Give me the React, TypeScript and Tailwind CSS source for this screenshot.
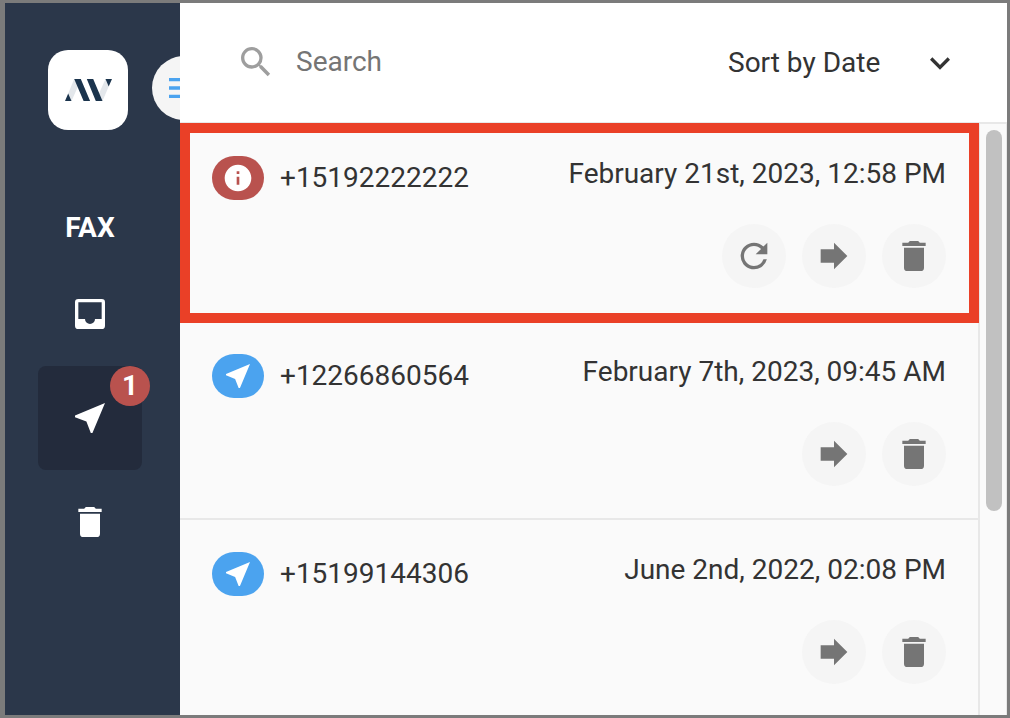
import React, { useState } from 'react';

const paths = {
  menu: 'M3 6h18v2H3V6m0 5h18v2H3v-2m0 5h18v2H3v-2z',
  inbox: 'M19 15h-4a3 3 0 0 1-6 0H5V5h14m0-2H5a2 2 0 0 0-2 2v14a2 2 0 0 0 2 2h14a2 2 0 0 0 2-2V5a2 2 0 0 0-2-2z',
  send: 'M21 3L3 10.53v.98l6.84 2.65L12.48 21h.98L21 3z',
  trash: 'M19 4h-3.5l-1-1h-5l-1 1H5v2h14M6 19a2 2 0 0 0 2 2h8a2 2 0 0 0 2-2V7H6v12z',
  search:
    'M15.5 14h-.79l-.28-.27A6.471 6.471 0 0 0 16 9.5 6.5 6.5 0 1 0 9.5 16c1.61 0 3.09-.59 4.23-1.57l.27.28v.79l5 4.99L20.49 19l-4.99-5zm-6 0C7.01 14 5 11.99 5 9.5S7.01 5 9.5 5 14 7.01 14 9.5 11.99 14 9.5 14z',
  chevron: 'M7.41 8.59L12 13.17l4.59-4.58L18 10l-6 6-6-6 1.41-1.41z',
  info: 'M12 2C6.48 2 2 6.48 2 12s4.48 10 10 10 10-4.48 10-10S17.52 2 12 2zm1 15h-2v-6h2v6zm0-8h-2V7h2v2z',
  retry:
    'M17.65 6.35A7.958 7.958 0 0 0 12 4a8 8 0 1 0 7.73 10h-2.08A5.99 5.99 0 0 1 12 18c-3.31 0-6-2.69-6-6s2.69-6 6-6c1.66 0 3.14.69 4.22 1.78L13 11h7V4l-2.35 2.35z',
  forward: 'M4 16V8h8V4l8 8-8 8v-4H4z',
};

type IconName = keyof typeof paths;

function Icon({ name, className = 'size-10' }: { name: IconName; className?: string }) {
  return (
    <svg viewBox="0 0 24 24" fill="currentColor" aria-hidden="true" className={`shrink-0 ${className}`}>
      <path d={paths[name]} />
    </svg>
  );
}

function Logo() {
  return (
    <div className="flex size-20 items-center justify-center rounded-[20px] bg-white">
      <svg viewBox="0 0 47 22" className="h-[22px] w-[47px]" aria-hidden="true">
        <path fill="#e3e7eb" d="M3.2 14.5L9.2 0l3.8 7.5L6.5 22zM40.5 0l3.2 7.5L37.5 22 34 14.5z" />
        <path
          fill="#1b344d"
          d="M9.2 0h6.6l9.3 22h-6.5zM21.8 0h6.4l9.3 22h-6.7zM0 22l3.2-7.5L6.5 22zM40.5 0H47l-3.3 7.5z"
        />
      </svg>
    </div>
  );
}

interface Fax {
  number: string;
  date: string;
  failed?: boolean;
}

const faxes: Fax[] = [
  { number: '+15192222222', date: 'February 21st, 2023, 12:58 PM', failed: true },
  { number: '+12266860564', date: 'February 7th, 2023, 09:45 AM' },
  { number: '+15199144306', date: 'June 2nd, 2022, 02:08 PM' },
];

function NavButton({ icon, label, active, count }: { icon: IconName; label: string; active?: boolean; count?: number }) {
  return (
    <button
      type="button"
      aria-label={label}
      className={`relative flex size-[104px] items-center justify-center rounded-lg text-white ${active ? 'bg-[#232b3c]' : ''}`}
    >
      <Icon name={icon} />
      {count && (
        <span className="absolute -right-2 top-0 flex size-10 items-center justify-center rounded-full bg-[#b9524e] text-[28px] font-bold">
          {count}
        </span>
      )}
    </button>
  );
}

function RoundButton({ icon, label }: { icon: IconName; label: string }) {
  return (
    <button
      type="button"
      aria-label={label}
      className="flex size-16 items-center justify-center rounded-full bg-[#f5f5f5] text-[#757575]"
    >
      <Icon name={icon} />
    </button>
  );
}

function FaxRow({ fax }: { fax: Fax }) {
  return (
    <li className="relative h-[198px] shrink-0 border-b-2 border-[#e8e8e8] px-8 pt-8">
      <div className="flex justify-between">
        <div className="flex items-center gap-4">
          <span
            className={`flex h-11 w-[52px] items-center justify-center rounded-[22px] text-white ${fax.failed ? 'bg-[#b9524e]' : 'bg-[#4ba3ef]'}`}
          >
            <Icon name={fax.failed ? 'info' : 'send'} className="size-8" />
          </span>
          <span>{fax.number}</span>
        </div>
        <time className="leading-9">{fax.date}</time>
      </div>
      <div className="mt-6 flex justify-end gap-4">
        {fax.failed && <RoundButton icon="retry" label="Retry" />}
        <RoundButton icon="forward" label="Forward" />
        <RoundButton icon="trash" label="Delete" />
      </div>
      {fax.failed && (
        <div className="pointer-events-none absolute -top-px -bottom-[3px] left-0 -right-px border-[10px] border-[#ea4027]" />
      )}
    </li>
  );
}

export default function App() {
  const [query, setQuery] = useState('');
  const [sort, setSort] = useState('date');

  return (
    <div className="flex h-screen overflow-hidden border-y-[3px] border-l-[5px] border-r-[3px] border-[#7b7b7b] bg-[#fafafa] font-['Roboto',sans-serif] text-[28px] leading-10 text-[#333333]">
      <aside className="w-[175px] shrink-0 overflow-hidden bg-[#2b374a]">
        <div className="flex w-max items-center gap-6 pl-[43px] pt-[47px]">
          <Logo />
          <button
            type="button"
            aria-label="Toggle menu"
            className="-mt-1 flex size-16 items-center justify-center rounded-full bg-[#f5f5f5] text-[#4ba3ef]"
          >
            <Icon name="menu" />
          </button>
        </div>
        <nav className="mt-[78px] flex w-[170px] flex-col items-center">
          <h2 className="mb-[14px] font-bold text-white">FAX</h2>
          <NavButton icon="inbox" label="Inbox" />
          <NavButton icon="send" label="Sent" active count={1} />
          <NavButton icon="trash" label="Trash" />
        </nav>
      </aside>

      <main className="flex min-w-0 flex-1 flex-col">
        <header className="flex h-[121px] shrink-0 items-center justify-between border-b-2 border-[#e8e8e8] bg-white pb-[2px] pl-14 pr-[47px]">
          <label className="flex items-center gap-5">
            <Icon name="search" className="size-10 text-[#9e9e9e]" />
            <input
              type="text"
              aria-label="Search"
              placeholder="Search"
              value={query}
              onChange={(e) => setQuery(e.target.value)}
              className="w-80 bg-transparent outline-none placeholder:text-[#757575]"
            />
          </label>
          <div className="relative mt-[3px] flex items-center">
            <select
              aria-label="Sort"
              value={sort}
              onChange={(e) => setSort(e.target.value)}
              className="w-[232px] appearance-none bg-transparent outline-none"
            >
              <option value="date">Sort by Date</option>
            </select>
            <Icon name="chevron" className="pointer-events-none absolute right-0 size-10" />
          </div>
        </header>

        <div className="flex min-h-0 flex-1">
          <ul className="flex min-w-0 flex-1 flex-col border-r-2 border-[#e8e8e8]">
            {faxes.map((fax) => (
              <FaxRow key={fax.number} fax={fax} />
            ))}
          </ul>
          <div className="w-[27px] shrink-0 border-r border-[#e8e8e8] px-[6px] pt-[6px]">
            <div className="h-[381px] w-4 rounded-full bg-[#c1c1c1]" />
          </div>
        </div>
      </main>
    </div>
  );
}
